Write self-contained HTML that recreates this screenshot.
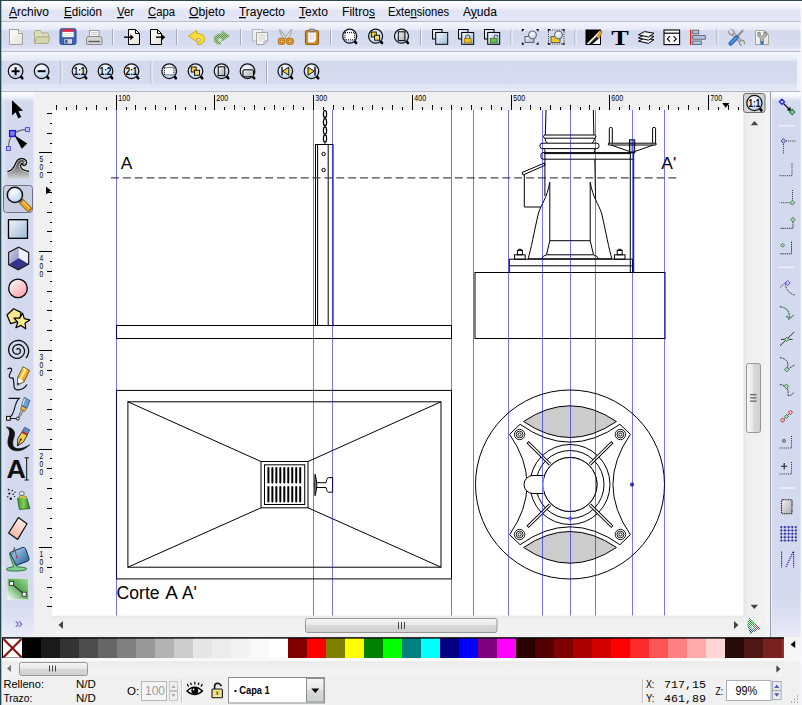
<!DOCTYPE html>
<html><head><meta charset="utf-8"><title>Inkscape</title>
<style>html,body{margin:0;padding:0;background:#f0f0f0;overflow:hidden}svg{display:block}text{white-space:pre}</style>
</head><body>
<svg width="802" height="705" viewBox="0 0 802 705">
<defs>
<clipPath id="cv"><rect x="52" y="110" width="691.5" height="505.5"/></clipPath>

<linearGradient id="gMenu" x1="0" y1="0" x2="0" y2="1"><stop offset="0" stop-color="#ffffff"/><stop offset="0.35" stop-color="#f1f2fa"/><stop offset="0.5" stop-color="#e1e4f4"/><stop offset="1" stop-color="#e6e8f6"/></linearGradient>
<linearGradient id="gTb" x1="0" y1="0" x2="0" y2="1"><stop offset="0" stop-color="#f6f7fc"/><stop offset="0.27" stop-color="#e5e8f6"/><stop offset="0.29" stop-color="#d3d9ee"/><stop offset="0.8" stop-color="#d8ddf0"/><stop offset="0.88" stop-color="#e2e6f4"/><stop offset="1" stop-color="#e9ecf7"/></linearGradient>
<linearGradient id="gTb2" x1="0" y1="0" x2="0" y2="1"><stop offset="0" stop-color="#f6f7fc"/><stop offset="0.21" stop-color="#e5e8f6"/><stop offset="0.23" stop-color="#d3d9ee"/><stop offset="0.78" stop-color="#d6dbef"/><stop offset="0.82" stop-color="#dfe3f3"/><stop offset="1" stop-color="#e8ebf7"/></linearGradient>
<linearGradient id="gSideV" x1="0" y1="0" x2="0" y2="1"><stop offset="0" stop-color="#fbfbfe" stop-opacity="1"/><stop offset="0.008" stop-color="#f4f5fc" stop-opacity="1"/><stop offset="0.02" stop-color="#e0e4f4" stop-opacity="0"/><stop offset="0.9" stop-color="#d3d9ee" stop-opacity="0"/><stop offset="1" stop-color="#f0f2fa" stop-opacity="0.8"/></linearGradient>
<linearGradient id="gSide" x1="0" y1="0" x2="1" y2="0"><stop offset="0" stop-color="#e6e9f6"/><stop offset="0.2" stop-color="#d3d9ee"/><stop offset="0.93" stop-color="#d3d9ee"/><stop offset="0.96" stop-color="#e6e9f5"/><stop offset="1" stop-color="#f0f1f6"/></linearGradient>
<linearGradient id="gThumbH" x1="0" y1="0" x2="0" y2="1"><stop offset="0" stop-color="#f6f6f6"/><stop offset="0.45" stop-color="#e9e9e9"/><stop offset="0.5" stop-color="#d9d9d9"/><stop offset="1" stop-color="#cfcfcf"/></linearGradient>
<linearGradient id="gThumbV" x1="0" y1="0" x2="1" y2="0"><stop offset="0" stop-color="#f6f6f6"/><stop offset="0.45" stop-color="#e9e9e9"/><stop offset="0.5" stop-color="#d9d9d9"/><stop offset="1" stop-color="#cfcfcf"/></linearGradient>
<linearGradient id="gTrackH" x1="0" y1="0" x2="0" y2="1"><stop offset="0" stop-color="#e9e9e9"/><stop offset="0.2" stop-color="#efefef"/><stop offset="1" stop-color="#f3f3f3"/></linearGradient>
<linearGradient id="gTrackV" x1="0" y1="0" x2="1" y2="0"><stop offset="0" stop-color="#e6e6e6"/><stop offset="0.2" stop-color="#eeeeee"/><stop offset="1" stop-color="#f2f2f2"/></linearGradient>


<radialGradient id="gLens" cx="0.4" cy="0.3" r="0.8"><stop offset="0" stop-color="#ffffff"/><stop offset="0.6" stop-color="#cfe0f4"/><stop offset="1" stop-color="#a9c4e6"/></radialGradient>
<linearGradient id="gPage" x1="0" y1="0" x2="1" y2="1"><stop offset="0" stop-color="#ffffff"/><stop offset="1" stop-color="#e3e3d6"/></linearGradient>
<linearGradient id="gBlueSq" x1="0" y1="0" x2="1" y2="1"><stop offset="0" stop-color="#f2f7fc"/><stop offset="1" stop-color="#9db8d8"/></linearGradient>
<linearGradient id="gPink" x1="0.15" y1="0.05" x2="0.85" y2="0.95"><stop offset="0" stop-color="#ffffff"/><stop offset="0.45" stop-color="#fdd0d4"/><stop offset="1" stop-color="#f4a0aa"/></linearGradient>
<linearGradient id="gEraser" x1="0.8" y1="0" x2="0.2" y2="1"><stop offset="0" stop-color="#fff4ee"/><stop offset="1" stop-color="#f0b09c"/></linearGradient>
<linearGradient id="gGreenSq" x1="0" y1="1" x2="1" y2="0"><stop offset="0" stop-color="#ffffff"/><stop offset="0.55" stop-color="#55aa55"/><stop offset="1" stop-color="#a8d8a8"/></linearGradient>
<linearGradient id="gWave" gradientUnits="userSpaceOnUse" x1="0" y1="163" x2="0" y2="179"><stop offset="0" stop-color="#5a5a5a"/><stop offset="1" stop-color="#d4d4d4"/></linearGradient>
<linearGradient id="gGrayPg" x1="0" y1="0" x2="1" y2="1"><stop offset="0" stop-color="#f4f4f4"/><stop offset="1" stop-color="#a8a8a8"/></linearGradient>
<linearGradient id="gOrange" x1="0" y1="0" x2="1" y2="1"><stop offset="0" stop-color="#ffd23a"/><stop offset="1" stop-color="#e08a10"/></linearGradient>
<linearGradient id="gBucket" x1="0" y1="0" x2="1" y2="1"><stop offset="0" stop-color="#cfe4f4"/><stop offset="0.5" stop-color="#6a9cc8"/><stop offset="1" stop-color="#2a568c"/></linearGradient>
<linearGradient id="gCan" x1="0" y1="0" x2="1" y2="0"><stop offset="0" stop-color="#3f9a2a"/><stop offset="0.5" stop-color="#7fd05a"/><stop offset="1" stop-color="#2f7a20"/></linearGradient>
<linearGradient id="gBox1" x1="0" y1="0" x2="1" y2="1"><stop offset="0" stop-color="#d8d8f0"/><stop offset="1" stop-color="#8888c0"/></linearGradient>
<radialGradient id="gCmsR" gradientUnits="userSpaceOnUse" cx="760" cy="628.3" r="8"><stop offset="0" stop-color="#b01020"/><stop offset="0.5" stop-color="#c02060" stop-opacity="0.7"/><stop offset="1" stop-color="#c02060" stop-opacity="0"/></radialGradient>
<radialGradient id="gCmsB" gradientUnits="userSpaceOnUse" cx="750" cy="633" r="7.5"><stop offset="0" stop-color="#101070"/><stop offset="0.5" stop-color="#2040c0" stop-opacity="0.8"/><stop offset="1" stop-color="#2060c0" stop-opacity="0"/></radialGradient>
<radialGradient id="gCmsC" gradientUnits="userSpaceOnUse" cx="752.5" cy="627.5" r="3"><stop offset="0" stop-color="#d0ffff" stop-opacity="0.8"/><stop offset="1" stop-color="#60e0e0" stop-opacity="0"/></radialGradient>
<pattern id="pChk" width="2" height="2" patternUnits="userSpaceOnUse"><rect width="1" height="1" fill="#f2f2f2"/><rect x="1" y="1" width="1" height="1" fill="#f2f2f2"/></pattern>
<pattern id="pHatch" width="2" height="2" patternUnits="userSpaceOnUse"><rect width="2" height="2" fill="#b4d0a4"/><rect width="1" height="1" fill="#5a9340"/><rect x="1" y="1" width="1" height="1" fill="#5a9340"/></pattern>

</defs>
<rect x="0" y="0" width="802" height="705" fill="#f0f0f0"/>
<rect x="0" y="0" width="802" height="22" fill="url(#gMenu)"/>
<rect x="0" y="21" width="802" height="1" fill="#b9bcc8"/>
<rect x="0" y="22" width="802" height="30" fill="url(#gTb)"/>
<rect x="0" y="51" width="802" height="1" fill="#b9bdcd"/>
<rect x="0" y="52" width="802" height="40" fill="url(#gTb2)"/>
<rect x="797" y="52" width="5" height="40" fill="#f2f3fa"/>
<rect x="0" y="91" width="802" height="1" fill="#b4b8c9"/>
<rect x="0" y="92" width="35" height="545" fill="url(#gSide)"/>
<rect x="765" y="92" width="6" height="545" fill="#f4f4f8"/>
<rect x="770" y="92" width="32" height="545" fill="#d3d9ee"/>
<rect x="0" y="92" width="35" height="545" fill="url(#gSideV)"/><rect x="770" y="92" width="32" height="545" fill="url(#gSideV)"/>
<rect x="52" y="110" width="691.5" height="505.5" fill="#ffffff"/>
<text x="9" y="16" font-family="'Liberation Sans', sans-serif" font-size="12.5" fill="#000" textLength="40" lengthAdjust="spacingAndGlyphs"><tspan text-decoration="underline">A</tspan>rchivo</text>
<text x="64" y="16" font-family="'Liberation Sans', sans-serif" font-size="12.5" fill="#000" textLength="38" lengthAdjust="spacingAndGlyphs"><tspan text-decoration="underline">E</tspan>dición</text>
<text x="117" y="16" font-family="'Liberation Sans', sans-serif" font-size="12.5" fill="#000" textLength="17" lengthAdjust="spacingAndGlyphs"><tspan text-decoration="underline">V</tspan>er</text>
<text x="148" y="16" font-family="'Liberation Sans', sans-serif" font-size="12.5" fill="#000" textLength="27" lengthAdjust="spacingAndGlyphs"><tspan text-decoration="underline">C</tspan>apa</text>
<text x="189" y="16" font-family="'Liberation Sans', sans-serif" font-size="12.5" fill="#000" textLength="36" lengthAdjust="spacingAndGlyphs"><tspan text-decoration="underline">O</tspan>bjeto</text>
<text x="239" y="16" font-family="'Liberation Sans', sans-serif" font-size="12.5" fill="#000" textLength="46" lengthAdjust="spacingAndGlyphs"><tspan text-decoration="underline">T</tspan>rayecto</text>
<text x="299" y="16" font-family="'Liberation Sans', sans-serif" font-size="12.5" fill="#000" textLength="29" lengthAdjust="spacingAndGlyphs"><tspan text-decoration="underline">T</tspan>exto</text>
<text x="342" y="16" font-family="'Liberation Sans', sans-serif" font-size="12.5" fill="#000" textLength="33" lengthAdjust="spacingAndGlyphs">Filtro<tspan text-decoration="underline">s</tspan></text>
<text x="388" y="16" font-family="'Liberation Sans', sans-serif" font-size="12.5" fill="#000" textLength="61" lengthAdjust="spacingAndGlyphs">Exte<tspan text-decoration="underline">n</tspan>siones</text>
<text x="463" y="16" font-family="'Liberation Sans', sans-serif" font-size="12.5" fill="#000" textLength="34" lengthAdjust="spacingAndGlyphs">A<tspan text-decoration="underline">y</tspan>uda</text>
<path d="M56.5 104.5V110 M66.5 107V110 M76.5 104.5V110 M86.5 107V110 M96.5 104.5V110 M106.5 107V110 M116.5 95V110 M126.5 107V110 M135.5 104.5V110 M145.5 107V110 M155.5 104.5V110 M165.5 107V110 M175.5 104.5V110 M185.5 107V110 M195.5 104.5V110 M205.5 107V110 M214.5 95V110 M224.5 107V110 M234.5 104.5V110 M244.5 107V110 M254.5 104.5V110 M264.5 107V110 M274.5 104.5V110 M283.5 107V110 M293.5 104.5V110 M303.5 107V110 M313.5 95V110 M323.5 107V110 M333.5 104.5V110 M343.5 107V110 M353.5 104.5V110 M362.5 107V110 M372.5 104.5V110 M382.5 107V110 M392.5 104.5V110 M402.5 107V110 M412.5 95V110 M422.5 107V110 M432.5 104.5V110 M441.5 107V110 M451.5 104.5V110 M461.5 107V110 M471.5 104.5V110 M481.5 107V110 M491.5 104.5V110 M501.5 107V110 M511.5 95V110 M520.5 107V110 M530.5 104.5V110 M540.5 107V110 M550.5 104.5V110 M560.5 107V110 M570.5 104.5V110 M580.5 107V110 M589.5 104.5V110 M599.5 107V110 M609.5 95V110 M619.5 107V110 M629.5 104.5V110 M639.5 107V110 M649.5 104.5V110 M659.5 107V110 M668.5 104.5V110 M678.5 107V110 M688.5 104.5V110 M698.5 107V110 M708.5 95V110 M718.5 107V110 M728.5 104.5V110 M738.5 107V110" stroke="#000" stroke-width="1" fill="none" shape-rendering="crispEdges"/>
<text x="118.3" y="101.2" font-family="'Liberation Sans', sans-serif" font-size="8.3" fill="#000" textLength="11.8" lengthAdjust="spacingAndGlyphs">100</text>
<text x="216.3" y="101.2" font-family="'Liberation Sans', sans-serif" font-size="8.3" fill="#000" textLength="11.8" lengthAdjust="spacingAndGlyphs">200</text>
<text x="315.3" y="101.2" font-family="'Liberation Sans', sans-serif" font-size="8.3" fill="#000" textLength="11.8" lengthAdjust="spacingAndGlyphs">300</text>
<text x="414.3" y="101.2" font-family="'Liberation Sans', sans-serif" font-size="8.3" fill="#000" textLength="11.8" lengthAdjust="spacingAndGlyphs">400</text>
<text x="513.3" y="101.2" font-family="'Liberation Sans', sans-serif" font-size="8.3" fill="#000" textLength="11.8" lengthAdjust="spacingAndGlyphs">500</text>
<text x="611.3" y="101.2" font-family="'Liberation Sans', sans-serif" font-size="8.3" fill="#000" textLength="11.8" lengthAdjust="spacingAndGlyphs">600</text>
<text x="710.3" y="101.2" font-family="'Liberation Sans', sans-serif" font-size="8.3" fill="#000" textLength="11.8" lengthAdjust="spacingAndGlyphs">700</text>
<path d="M47 113.5H52 M50 123.5H52 M47 133.5H52 M50 143.5H52 M39 152.5H52 M50 162.5H52 M47 172.5H52 M50 182.5H52 M47 192.5H52 M50 202.5H52 M47 212.5H52 M50 222.5H52 M47 231.5H52 M50 241.5H52 M39 251.5H52 M50 261.5H52 M47 271.5H52 M50 281.5H52 M47 291.5H52 M50 301.5H52 M47 310.5H52 M50 320.5H52 M47 330.5H52 M50 340.5H52 M39 350.5H52 M50 360.5H52 M47 370.5H52 M50 379.5H52 M47 389.5H52 M50 399.5H52 M47 409.5H52 M50 419.5H52 M47 429.5H52 M50 439.5H52 M39 449.5H52 M50 458.5H52 M47 468.5H52 M50 478.5H52 M47 488.5H52 M50 498.5H52 M47 508.5H52 M50 518.5H52 M47 528.5H52 M50 537.5H52 M39 547.5H52 M50 557.5H52 M47 567.5H52 M50 577.5H52 M47 587.5H52 M50 597.5H52 M47 606.5H52" stroke="#000" stroke-width="1" fill="none" shape-rendering="crispEdges"/>
<text x="39.6" y="161.9" font-family="'Liberation Sans', sans-serif" font-size="8.3" fill="#000" textLength="3.7" lengthAdjust="spacingAndGlyphs">5</text>
<text x="39.6" y="169.9" font-family="'Liberation Sans', sans-serif" font-size="8.3" fill="#000" textLength="3.7" lengthAdjust="spacingAndGlyphs">0</text>
<text x="39.6" y="177.9" font-family="'Liberation Sans', sans-serif" font-size="8.3" fill="#000" textLength="3.7" lengthAdjust="spacingAndGlyphs">0</text>
<text x="39.6" y="260.9" font-family="'Liberation Sans', sans-serif" font-size="8.3" fill="#000" textLength="3.7" lengthAdjust="spacingAndGlyphs">4</text>
<text x="39.6" y="268.9" font-family="'Liberation Sans', sans-serif" font-size="8.3" fill="#000" textLength="3.7" lengthAdjust="spacingAndGlyphs">0</text>
<text x="39.6" y="276.9" font-family="'Liberation Sans', sans-serif" font-size="8.3" fill="#000" textLength="3.7" lengthAdjust="spacingAndGlyphs">0</text>
<text x="39.6" y="359.9" font-family="'Liberation Sans', sans-serif" font-size="8.3" fill="#000" textLength="3.7" lengthAdjust="spacingAndGlyphs">3</text>
<text x="39.6" y="367.9" font-family="'Liberation Sans', sans-serif" font-size="8.3" fill="#000" textLength="3.7" lengthAdjust="spacingAndGlyphs">0</text>
<text x="39.6" y="375.9" font-family="'Liberation Sans', sans-serif" font-size="8.3" fill="#000" textLength="3.7" lengthAdjust="spacingAndGlyphs">0</text>
<text x="39.6" y="458.9" font-family="'Liberation Sans', sans-serif" font-size="8.3" fill="#000" textLength="3.7" lengthAdjust="spacingAndGlyphs">2</text>
<text x="39.6" y="466.9" font-family="'Liberation Sans', sans-serif" font-size="8.3" fill="#000" textLength="3.7" lengthAdjust="spacingAndGlyphs">0</text>
<text x="39.6" y="474.9" font-family="'Liberation Sans', sans-serif" font-size="8.3" fill="#000" textLength="3.7" lengthAdjust="spacingAndGlyphs">0</text>
<text x="39.6" y="556.9" font-family="'Liberation Sans', sans-serif" font-size="8.3" fill="#000" textLength="3.7" lengthAdjust="spacingAndGlyphs">1</text>
<text x="39.6" y="564.9" font-family="'Liberation Sans', sans-serif" font-size="8.3" fill="#000" textLength="3.7" lengthAdjust="spacingAndGlyphs">0</text>
<text x="39.6" y="572.9" font-family="'Liberation Sans', sans-serif" font-size="8.3" fill="#000" textLength="3.7" lengthAdjust="spacingAndGlyphs">0</text>
<path d="M722.2 103h7.2l-3.6 4.8z" fill="#000"/>
<path d="M46 186.5v8l5 -4z" fill="#000"/>
<g clip-path="url(#cv)">
<rect x="116.5" y="325.5" width="335" height="13" stroke="#000" stroke-width="1" fill="none"/>
<rect x="315.5" y="144.5" width="17.5" height="181" stroke="#000" stroke-width="1" fill="none"/>
<path d="M317.6 144.5V325.5M328.2 144.5V325.5" stroke="#000" stroke-width="1" fill="none"/>
<circle cx="323.6" cy="154" r="1.7" stroke="#000" stroke-width="1" fill="none"/><circle cx="323.6" cy="170" r="1.7" stroke="#000" stroke-width="1" fill="none"/>
<ellipse cx="325" cy="114" rx="1.6" ry="3.6" stroke="#000" stroke-width="1.25" fill="none"/>
<ellipse cx="325" cy="122.2" rx="1.6" ry="3.6" stroke="#000" stroke-width="1.25" fill="none"/>
<ellipse cx="325" cy="130.4" rx="1.6" ry="3.6" stroke="#000" stroke-width="1.25" fill="none"/>
<ellipse cx="325" cy="138.4" rx="1.6" ry="3.6" stroke="#000" stroke-width="1.25" fill="none"/>
<path d="M325 142.3V144.5" stroke="#000" stroke-width="1" fill="none"/>
<text x="120.8" y="168.7" font-family="'Liberation Sans', sans-serif" font-size="17.4" fill="#000">A</text>
<text x="661.3" y="168.6" font-family="'Liberation Sans', sans-serif" font-size="17.4" fill="#000">A'</text>
<text y="598.7" font-family="'Liberation Sans', sans-serif" font-size="18" fill="#000"><tspan x="116.6" textLength="43" lengthAdjust="spacingAndGlyphs">Corte</tspan> <tspan x="165.3" textLength="11.6" lengthAdjust="spacingAndGlyphs">A</tspan> <tspan x="181.9" textLength="14.8" lengthAdjust="spacingAndGlyphs">A'</tspan></text>
<path d="M111 177.9H676.4" stroke="#4a4a4a" stroke-width="1.4" stroke-dasharray="7.9 3.96" fill="none"/>
<rect x="116.5" y="390.4" width="335" height="188.5" stroke="#000" stroke-width="1" fill="none"/>
<rect x="127.9" y="401.8" width="313.1" height="165.4" stroke="#000" stroke-width="1" fill="none"/>
<path d="M127.9 401.8L261 461.5M441 401.8L308 461.5M127.9 567.2L261 507.8M441 567.2L308 507.8" stroke="#000" stroke-width="1" fill="none"/>
<rect x="261" y="461.5" width="47" height="46.3" stroke="#000" stroke-width="1" fill="none"/>
<rect x="264.5" y="464.8" width="40.2" height="39.7" stroke="#000" stroke-width="1" fill="none" stroke-width="1.2"/>
<path d="M268.40 468V482.6M268.40 487V501.4M272.38 468V482.6M272.38 487V501.4M276.35 468V482.6M276.35 487V501.4M280.32 468V482.6M280.32 487V501.4M284.30 468V482.6M284.30 487V501.4M288.27 468V482.6M288.27 487V501.4M292.25 468V482.6M292.25 487V501.4M296.22 468V482.6M296.22 487V501.4M300.20 468V482.6M300.20 487V501.4" stroke="#000" stroke-width="2" stroke-linecap="round" fill="none"/>
<path d="M315 474.3Q318.6 485 315 495.8Q314.4 485 315 474.3Z" fill="#999" stroke="#000" stroke-width="1" />
<path d="M317 482.7H326C326.6 480.5 327 477.6 328.6 477.6H332.6V492.2H328.6C327 492.2 326.6 489.6 326 487.5H317" stroke="#000" stroke-width="1" fill="none"/>
<rect x="475" y="272.5" width="190" height="66" stroke="#000" stroke-width="1" fill="none"/>
<rect x="509.3" y="259.2" width="123.2" height="13.3" stroke="#000" stroke-width="1" fill="none"/>
<path d="M509.3 265.8H632.5" stroke="#000" stroke-width="1" fill="none"/>
<path d="M546 110L545.3 135M593.3 110L593.9 135" stroke="#000" stroke-width="1" fill="none"/>
<rect x="543.5" y="135" width="52.5" height="3.2" rx="1.6" stroke="#000" stroke-width="1" fill="none"/>
<path d="M545 138.2Q545 141.5 547.5 143.2M594.5 138.2Q594.5 141.5 592 143.2" stroke="#000" stroke-width="1" fill="none"/>
<rect x="540" y="143.2" width="59" height="5.4" rx="2.2" stroke="#000" stroke-width="1" fill="none"/>
<path d="M543.5 148.6Q545.5 150 545 152.6M595.5 148.6Q593.5 150 594.5 152.6" stroke="#000" stroke-width="1" fill="none"/>
<path d="M633 152.6H543Q541 152.6 541 154.5V157.3Q541 159.2 543 159.2H633" stroke="#000" stroke-width="1" fill="none"/>
<path d="M544 153.6H630" stroke="#000" stroke-width="1" fill="none"/>
<path d="M544.9 153V159.2" stroke="#000" stroke-width="1" fill="none"/>
<path d="M544.9 159.2V196M594.8 159.2L595.6 200" stroke="#000" stroke-width="1" fill="none"/>
<path d="M549.8 182.3V240.7H590.2V182.3" stroke="#000" stroke-width="1" fill="none"/>
<path d="M549.8 182.3C547 198 541.5 204 538.5 213C534 232 531 250 528 258.8" stroke="#000" stroke-width="1" fill="none"/>
<path d="M590.2 182.3C593 198 598.5 204 601.5 213C606 232 609 250 612 258.8" stroke="#000" stroke-width="1" fill="none"/>
<path d="M528 258.8H612" stroke="#000" stroke-width="1" fill="none"/>
<path d="M549.8 240.7L546.5 254.8H593.5L590.2 240.7" stroke="#000" stroke-width="1" fill="none"/>
<path d="M546.5 254.8Q543 255.5 541.5 258.8M593.5 254.8Q597 255.5 598.5 258.8" stroke="#000" stroke-width="1" fill="none"/>
<rect x="514.6" y="254.8" width="10.6" height="4.4" stroke="#000" stroke-width="1" fill="none"/>
<rect x="517.4" y="250.5" width="5" height="4.3" stroke="#000" stroke-width="1" fill="none"/>
<path d="M518.4 250.5v-1.2h3v1.2" stroke="#000" stroke-width="1" fill="none"/>
<rect x="614.4" y="254.8" width="10.6" height="4.4" stroke="#000" stroke-width="1" fill="none"/>
<rect x="617.1999999999999" y="250.5" width="5" height="4.3" stroke="#000" stroke-width="1" fill="none"/>
<path d="M618.1999999999999 250.5v-1.2h3v1.2" stroke="#000" stroke-width="1" fill="none"/>
<path d="M522 172.5L544.5 163L545 165.3L523 175Z" stroke="#000" stroke-width="1" fill="none"/>
<path d="M524.3 174.5V207H541" stroke="#000" stroke-width="1" fill="none"/>
<rect x="630.3" y="152" width="3.4" height="120.5" stroke="#000" stroke-width="1" fill="none"/>
<rect x="629.5" y="139.8" width="5.2" height="13" stroke="#000" stroke-width="1" fill="none"/>
<path d="M631 139.8V152.5M633.2 139.8V152.5" stroke="#000" stroke-width="0.6" fill="none"/>
<path d="M608.4 143.2H656V145H608.4Z" stroke="#000" stroke-width="1" fill="none"/>
<path d="M609.3 143.2V128.8Q609.3 127.3 610.8 127.3Q612.3 127.3 612.3 128.8V143.2M652.6 143.2V128.8Q652.6 127.3 654.1 127.3Q655.6 127.3 655.6 128.8V143.2" stroke="#000" stroke-width="1" fill="none"/>
<path d="M611 145L629.5 151.5M653.5 145L634.7 151.5" stroke="#000" stroke-width="1" fill="none"/>
<circle cx="570" cy="484.5" r="94.5" stroke="#000" stroke-width="1" fill="none"/>
<path d="M523.6 421.5Q570 390.1 616.4 421.5Q570 453.5 523.6 421.5Z" fill="#cccccc" stroke="#000" stroke-width="1"/>
<path d="M523.6 547.5Q570 578.9000000000001 616.4 547.5Q570 515.5 523.6 547.5Z" fill="#cccccc" stroke="#000" stroke-width="1"/>
<path d="M509.6 434.3L520.1 424.3Q570.0 460.0 619.9 424.3L630.4 434.3Q595.5 484.5 630.4 534.7L619.9 544.7Q570.0 509.0 520.1 544.7L509.6 534.7Q544.5 484.5 509.6 434.3Z" stroke="#000" stroke-width="1" fill="none"/>
<circle cx="570" cy="484.5" r="40" stroke="#000" stroke-width="1" fill="#fff"/>
<circle cx="570" cy="484.5" r="34" stroke="#000" stroke-width="1" fill="#fff"/>
<circle cx="570" cy="484.5" r="27" stroke="#000" stroke-width="1" fill="#fff"/>
<path d="M612.4 526.9L589.9 504.7" stroke="#000" stroke-width="3.2" fill="none"/>
<path d="M611.7 526.2L589.9 504.7" stroke="#fff" stroke-width="1.3" fill="none"/>
<path d="M612.4 442.1L589.9 464.3" stroke="#000" stroke-width="3.2" fill="none"/>
<path d="M611.7 442.8L589.9 464.3" stroke="#fff" stroke-width="1.3" fill="none"/>
<path d="M527.6 526.9L550.1 504.7" stroke="#000" stroke-width="3.2" fill="none"/>
<path d="M528.3 526.2L550.1 504.7" stroke="#fff" stroke-width="1.3" fill="none"/>
<path d="M527.6 442.1L550.1 464.3" stroke="#000" stroke-width="3.2" fill="none"/>
<path d="M528.3 442.8L550.1 464.3" stroke="#fff" stroke-width="1.3" fill="none"/>
<circle cx="570" cy="484.5" r="27" stroke="#000" stroke-width="1" fill="#fff"/>
<path d="M543.5 475.5H533A9 9 0 0 0 533 493.5H543.5" stroke="#000" stroke-width="1" fill="#fff"/>
<circle cx="620.4" cy="534.5" r="5.2" stroke="#000" stroke-width="0.9" fill="none"/>
<circle cx="620.4" cy="534.5" r="3.4" stroke="#000" stroke-width="0.9" fill="none"/>
<circle cx="620.4" cy="534.5" r="1.6" stroke="#000" stroke-width="0.9" fill="none"/>
<circle cx="620.4" cy="434.5" r="5.2" stroke="#000" stroke-width="0.9" fill="none"/>
<circle cx="620.4" cy="434.5" r="3.4" stroke="#000" stroke-width="0.9" fill="none"/>
<circle cx="620.4" cy="434.5" r="1.6" stroke="#000" stroke-width="0.9" fill="none"/>
<circle cx="519.6" cy="534.5" r="5.2" stroke="#000" stroke-width="0.9" fill="none"/>
<circle cx="519.6" cy="534.5" r="3.4" stroke="#000" stroke-width="0.9" fill="none"/>
<circle cx="519.6" cy="534.5" r="1.6" stroke="#000" stroke-width="0.9" fill="none"/>
<circle cx="519.6" cy="434.5" r="5.2" stroke="#000" stroke-width="0.9" fill="none"/>
<circle cx="519.6" cy="434.5" r="3.4" stroke="#000" stroke-width="0.9" fill="none"/>
<circle cx="519.6" cy="434.5" r="1.6" stroke="#000" stroke-width="0.9" fill="none"/>
<circle cx="632" cy="484.5" r="1.6" stroke="#223" stroke-width="1" fill="#55f"/>
<circle cx="570" cy="518.6" r="1.5" stroke="#33f" stroke-width="0.8" fill="#aaf"/>
<path d="M116.5 110V616M313.5 110V616M332.5 110V616M451.5 110V616M473.5 110V616M508.5 110V616M542.5 110V616M570.5 110V616M595.5 110V616M632.5 110V616M664.5 110V616" stroke="#0000ff" stroke-width="1" fill="none" opacity="0.55" shape-rendering="crispEdges"/>
</g>
<rect x="52" y="616" width="692" height="19" fill="url(#gTrackH)"/>
<path d="M63 621v8l-4.5 -4z" fill="#444"/>
<path d="M734 621v8l4.5 -4z" fill="#444"/>
<rect x="305.5" y="618.5" width="191.5" height="14" rx="2" fill="url(#gThumbH)" stroke="#979797"/>
<path d="M398.5 622v7M401.5 622v7M404.5 622v7" stroke="#444" stroke-width="1"/>
<rect x="743.5" y="113" width="21.5" height="503" fill="url(#gTrackV)"/>
<path d="M750.8 125.3h7.4l-3.7 -4.2z" fill="#444"/>
<path d="M750.6 604.8h7.4l-3.7 4.2z" fill="#444"/>
<rect x="746.5" y="363.5" width="14" height="69" rx="2" fill="url(#gThumbV)" stroke="#979797"/>
<path d="M750 394.7h6.5M750 397.9h6.5M750 401.1h6.5" stroke="#444" stroke-width="1"/>
<rect x="2" y="661.4" width="782" height="15" fill="url(#gTrackH)"/>
<path d="M11 665v7l-4 -3.5z" fill="#777"/>
<path d="M776.4 665.2v7.4l4 -3.7z" fill="#444"/>
<rect x="19.5" y="662.5" width="68" height="13" rx="2" fill="url(#gThumbH)" stroke="#979797"/>
<path d="M49.5 665.5v6M52.5 665.5v6M55.5 665.5v6" stroke="#444" stroke-width="1"/>
<rect x="2" y="637.2" width="782" height="21.2" fill="#000"/>
<rect x="3" y="638.6" width="19" height="19" fill="#fff"/>
<path d="M3.5 639L21.5 657.2M21.5 639L3.5 657.2" stroke="#8b1010" stroke-width="2.1" fill="none"/>
<rect x="22" y="638.6" width="19.05" height="20" fill="#000000"/>
<rect x="41" y="638.6" width="19.05" height="20" fill="#1a1a1a"/>
<rect x="60" y="638.6" width="19.05" height="20" fill="#333333"/>
<rect x="79" y="638.6" width="19.05" height="20" fill="#4d4d4d"/>
<rect x="98" y="638.6" width="19.05" height="20" fill="#666666"/>
<rect x="117" y="638.6" width="19.05" height="20" fill="#808080"/>
<rect x="136" y="638.6" width="19.05" height="20" fill="#999999"/>
<rect x="155" y="638.6" width="19.05" height="20" fill="#b3b3b3"/>
<rect x="174" y="638.6" width="19.05" height="20" fill="#cccccc"/>
<rect x="193" y="638.6" width="19.05" height="20" fill="#e6e6e6"/>
<rect x="212" y="638.6" width="19.05" height="20" fill="#ececec"/>
<rect x="231" y="638.6" width="19.05" height="20" fill="#f2f2f2"/>
<rect x="250" y="638.6" width="19.05" height="20" fill="#f9f9f9"/>
<rect x="269" y="638.6" width="19.05" height="20" fill="#ffffff"/>
<rect x="288" y="638.6" width="19.05" height="20" fill="#800000"/>
<rect x="307" y="638.6" width="19.05" height="20" fill="#ff0000"/>
<rect x="326" y="638.6" width="19.05" height="20" fill="#808000"/>
<rect x="345" y="638.6" width="19.05" height="20" fill="#ffff00"/>
<rect x="364" y="638.6" width="19.05" height="20" fill="#008000"/>
<rect x="383" y="638.6" width="19.05" height="20" fill="#00ff00"/>
<rect x="402" y="638.6" width="19.05" height="20" fill="#008080"/>
<rect x="421" y="638.6" width="19.05" height="20" fill="#00ffff"/>
<rect x="440" y="638.6" width="19.05" height="20" fill="#000080"/>
<rect x="459" y="638.6" width="19.05" height="20" fill="#0000ff"/>
<rect x="478" y="638.6" width="19.05" height="20" fill="#800080"/>
<rect x="497" y="638.6" width="19.05" height="20" fill="#ff00ff"/>
<rect x="516" y="638.6" width="19.05" height="20" fill="#2b0000"/>
<rect x="535" y="638.6" width="19.05" height="20" fill="#550000"/>
<rect x="554" y="638.6" width="19.05" height="20" fill="#800000"/>
<rect x="573" y="638.6" width="19.05" height="20" fill="#aa0000"/>
<rect x="592" y="638.6" width="19.05" height="20" fill="#d40000"/>
<rect x="611" y="638.6" width="19.05" height="20" fill="#ff0000"/>
<rect x="630" y="638.6" width="19.05" height="20" fill="#ff2a2a"/>
<rect x="649" y="638.6" width="19.05" height="20" fill="#ff5555"/>
<rect x="668" y="638.6" width="19.05" height="20" fill="#ff8080"/>
<rect x="687" y="638.6" width="19.05" height="20" fill="#ffaaaa"/>
<rect x="706" y="638.6" width="19.05" height="20" fill="#ffd5d5"/>
<rect x="725" y="638.6" width="19.05" height="20" fill="#280b0b"/>
<rect x="744" y="638.6" width="19.05" height="20" fill="#501616"/>
<rect x="763" y="638.6" width="19.05" height="20" fill="#782121"/>
<rect x="782" y="638.6" width="2" height="20" fill="#a02c2c"/>
<rect x="784" y="637" width="18" height="23" fill="#f6f6f6"/>
<rect x="1" y="658" width="801" height="3.4" fill="#f8f8f8"/>
<path d="M795.2 640.8v7.2l-4.6 -3.6z" fill="#000"/>
<text x="3.4" y="688" font-family="'Liberation Sans', sans-serif" font-size="11.5" fill="#000" textLength="40.6" lengthAdjust="spacingAndGlyphs">Relleno:</text>
<text x="3.4" y="702" font-family="'Liberation Sans', sans-serif" font-size="11.5" fill="#000" textLength="29" lengthAdjust="spacingAndGlyphs">Trazo:</text>
<text x="76" y="688" font-family="'Liberation Sans', sans-serif" font-size="11.5" fill="#000" >N/D</text>
<text x="76" y="702" font-family="'Liberation Sans', sans-serif" font-size="11.5" fill="#000" >N/D</text>
<text x="127" y="695" font-family="'Liberation Sans', sans-serif" font-size="11.5" fill="#000" font-size="12">O:</text>
<rect x="141.5" y="681.5" width="25" height="19" fill="#f4f4f4" stroke="#b5b5b5"/>
<text x="145" y="695" font-family="'Liberation Sans', sans-serif" font-size="12" fill="#9a9a9a">100</text>
<rect x="169.5" y="681.5" width="8" height="9" fill="#f0f0f0" stroke="#c4c4c4"/><rect x="169.5" y="691.5" width="8" height="9" fill="#f0f0f0" stroke="#c4c4c4"/>
<path d="M171.5 688h4l-2 -3zM171.5 694h4l-2 3z" fill="#aaa"/>
<path d="M181.5 679v24" stroke="#c8c8c8"/><path d="M182.5 679v24" stroke="#fff"/>
<rect x="228.5" y="677.5" width="96" height="25.5" fill="#fff" stroke="#8e8f8f"/>
<rect x="306.5" y="678.5" width="17.5" height="23.5" fill="url(#gThumbH)" stroke="#8e8f8f"/>
<path d="M311.3 688.4h8l-4 4.6z" fill="#000"/>
<text x="234" y="694" font-family="'Liberation Sans', sans-serif" font-size="11" font-weight="bold" fill="#000"><tspan font-size="8" dy="-0.8">•</tspan><tspan x="239.3" dy="0.8" textLength="30.4" lengthAdjust="spacingAndGlyphs">Capa 1</tspan></text>
<path d="M642.5 679v24" stroke="#c0c0c0"/><path d="M643.5 679v24" stroke="#fff"/>
<text x="646" y="688" font-family="'Liberation Sans', sans-serif" font-size="11.5" fill="#000" textLength="8.3" lengthAdjust="spacingAndGlyphs">X:</text>
<text x="646" y="702" font-family="'Liberation Sans', sans-serif" font-size="11.5" fill="#000" textLength="8.3" lengthAdjust="spacingAndGlyphs">Y:</text>
<text x="664" y="688" font-family="'Liberation Mono', monospace" font-size="11.5" fill="#000" textLength="42" lengthAdjust="spacingAndGlyphs">717,15</text>
<text x="664" y="702" font-family="'Liberation Mono', monospace" font-size="11.5" fill="#000" textLength="42" lengthAdjust="spacingAndGlyphs">461,89</text>
<text x="715.6" y="695" font-family="'Liberation Sans', sans-serif" font-size="11.5" fill="#000" font-size="12" textLength="7.6" lengthAdjust="spacingAndGlyphs">Z:</text>
<rect x="726.5" y="680.5" width="44.5" height="20" fill="#fff" stroke="#abadb3"/>
<text x="735.4" y="695" font-family="'Liberation Sans', sans-serif" font-size="12" fill="#000" textLength="21.6" lengthAdjust="spacingAndGlyphs">99%</text>
<rect x="772.5" y="681.5" width="8.6" height="8.8" fill="#ececf0" stroke="#a8a8b0"/><rect x="772.5" y="690.8" width="8.6" height="8.8" fill="#ececf0" stroke="#a8a8b0"/>
<path d="M774.2 688h5.2l-2.6 -3.6zM774.2 693.2h5.2l-2.6 3.6z" fill="#4a5ab8"/>
<path d="M797 702h1M794 702h1M797 699h1M791 702h1M794 699h1M797 696h1" stroke="#b8b8b8" stroke-width="2"/>
<path d="M112.5 29V45" stroke="#a7a9b6" stroke-width="1"/><path d="M113.5 29V45" stroke="#f6f7fc" stroke-width="1"/>
<path d="M176.5 29V45" stroke="#a7a9b6" stroke-width="1"/><path d="M177.5 29V45" stroke="#f6f7fc" stroke-width="1"/>
<path d="M240.5 29V45" stroke="#a7a9b6" stroke-width="1"/><path d="M241.5 29V45" stroke="#f6f7fc" stroke-width="1"/>
<path d="M330.5 29V45" stroke="#a7a9b6" stroke-width="1"/><path d="M331.5 29V45" stroke="#f6f7fc" stroke-width="1"/>
<path d="M420.5 29V45" stroke="#a7a9b6" stroke-width="1"/><path d="M421.5 29V45" stroke="#f6f7fc" stroke-width="1"/>
<path d="M511 29V45" stroke="#a7a9b6" stroke-width="1"/><path d="M512 29V45" stroke="#f6f7fc" stroke-width="1"/>
<path d="M575 29V45" stroke="#a7a9b6" stroke-width="1"/><path d="M576 29V45" stroke="#f6f7fc" stroke-width="1"/>
<path d="M717 29V45" stroke="#a7a9b6" stroke-width="1"/><path d="M718 29V45" stroke="#f6f7fc" stroke-width="1"/>
<path d="M9.5 29.5H18.5L22.5 33.5V44.5H9.5Z" fill="url(#gPage)" stroke="#a3a395" stroke-width="1"/><path d="M18.5 29.5V33.5H22.5" fill="#f4f4ec" stroke="#a3a395" stroke-width="1"/>
<path d="M34.5 43.5V31.5Q34.5 30.5 35.5 30.5H40Q41 30.5 41.3 31.5L41.8 33H47.5Q48.5 33 48.5 34V37" fill="#dcdcbc" stroke="#a9a986" stroke-width="1"/>
<path d="M34.5 43.5L36.5 37.5Q36.8 36.8 37.8 36.8H49Q49.8 36.8 49.6 37.6L48.3 42.6Q48 43.5 47 43.5Z" fill="#d3d3ac" stroke="#a9a986" stroke-width="1"/>
<rect x="60" y="28.8" width="16" height="15.6" rx="1.5" fill="#3c64b4" stroke="#2a4a96" stroke-width="1"/>
<rect x="62.3" y="29.3" width="11.4" height="2.6" fill="#ea2a3c"/>
<rect x="62.3" y="31.9" width="11.4" height="5.2" fill="#ffffff"/><path d="M63.5 33.6h9M63.5 35.4h9" stroke="#d8d8d8" stroke-width="0.7"/>
<rect x="64" y="38.8" width="8.3" height="5.2" fill="#d5d9e2" stroke="#24427f" stroke-width="0.6"/><rect x="65.3" y="39.8" width="2.2" height="3.4" fill="#3a5694"/>
<rect x="89.5" y="30.5" width="9.5" height="6.5" fill="#fafaf6" stroke="#9a9a9a" stroke-width="1"/><path d="M91.3 32.6h6M91.3 34.4h6" stroke="#b8b8b8" stroke-width="0.8"/>
<path d="M86.5 43.8V38.8Q86.5 36.5 88.8 36.5H99.8Q102 36.5 102 38.8V43.8Q102 44.5 101.3 44.5H87.2Q86.5 44.5 86.5 43.8Z" fill="#d4d4d0" stroke="#8a8a8a" stroke-width="1"/>
<path d="M88.5 41.5H100" stroke="#555" stroke-width="1.3"/>
<path d="M128.5 29.5H135.5L139.5 33.5V44.5H128.5Z" fill="url(#gPage)" stroke="#000" stroke-width="1"/><path d="M135.5 29.5V33.5H139.5" fill="none" stroke="#000" stroke-width="1"/>
<path d="M124 37.2H131.5" stroke="#000" stroke-width="1.4"/><path d="M130.3 34.2L133.8 37.2L130.3 40.2Z" fill="#000"/>
<path d="M150.5 29.5H157.5L161.5 33.5V44.5H150.5Z" fill="url(#gPage)" stroke="#000" stroke-width="1"/><path d="M157.5 29.5V33.5H161.5" fill="none" stroke="#000" stroke-width="1"/>
<path d="M156 37.2H163" stroke="#000" stroke-width="1.4"/><path d="M161.8 34.2L165.3 37.2L161.8 40.2Z" fill="#000"/>
<path d="M188.6 36L196.6 30.4V33.4C202.5 33.2 205 36.4 204.4 40C204 43 201.4 44.8 197.6 44.4L197.8 41.6C199.8 41.6 200.6 40.6 200.4 39.4C200.2 38.4 198.8 38 196.6 38.4V41.6Z" fill="#f7dc3a" stroke="#c9a512" stroke-width="0.9" stroke-linejoin="round"/>
<path d="M229.8 36 L221.8 30.4 V33.4 C215.9 33.2 213.4 36.4 214.0 40 C214.4 43 217.0 44.8 220.8 44.4 L220.6 41.6 C218.6 41.6 217.8 40.6 218.0 39.4 C218.2 38.4 219.6 38 221.8 38.4 V41.6 Z" fill="url(#pHatch)" stroke="#9cc08a" stroke-width="0.5" stroke-linejoin="round"/>
<rect x="252.5" y="29.5" width="10" height="11.5" fill="#eef0f6" stroke="#b4b6bd" stroke-width="1"/>
<path d="M256.5 32.5H267.5V41L264 44.5H256.5Z" fill="#f5f5f3" stroke="#a2a2a2" stroke-width="1"/><path d="M267.5 41H264V44.5" fill="none" stroke="#a2a2a2" stroke-width="0.9"/><path d="M258.5 35h7M258.5 37h7M258.5 39h7M258.5 41h4" stroke="#c9c9c9" stroke-width="0.8"/>
<path d="M279.8 29.2C279.3 32 281.5 36 284.6 39.2L286 37.2C284 34.5 281.5 31 279.8 29.2Z" fill="#d9d9d9" stroke="#8c8c8c" stroke-width="0.8"/>
<path d="M291.6 29.2C292.1 32 289.9 36 286.8 39.2L285.4 37.2C287.4 34.5 289.9 31 291.6 29.2Z" fill="#e4e4e4" stroke="#8c8c8c" stroke-width="0.8"/>
<rect x="278.3" y="38.3" width="6.6" height="6" rx="1.6" fill="#e19a2e" stroke="#b26f10" stroke-width="1"/><rect x="286.6" y="38.3" width="6.6" height="6" rx="1.6" fill="#e19a2e" stroke="#b26f10" stroke-width="1"/>
<rect x="280.3" y="40.2" width="2.6" height="2.3" fill="#f7dcae" stroke="#b26f10" stroke-width="0.6"/><rect x="288.6" y="40.2" width="2.6" height="2.3" fill="#f7dcae" stroke="#b26f10" stroke-width="0.6"/>
<rect x="305.5" y="30.5" width="13" height="14" rx="1.5" fill="#cf8a2a" stroke="#9a5f0c" stroke-width="1.2"/>
<path d="M308 32.5H316V40L314 42.5H308Z" fill="#fbfbf8" stroke="#b9b9b0" stroke-width="0.6"/><path d="M309.5 35h5M309.5 37h5M309.5 39h4" stroke="#c4c4c4" stroke-width="0.7"/>
<rect x="309" y="29" width="6" height="2.6" rx="0.8" fill="#9d9d9d" stroke="#6b6b6b" stroke-width="0.7"/>
<path d="M354.6 41.1L356.1 43.0" stroke="#000" stroke-width="2.6" stroke-linecap="round"/><circle cx="349.7" cy="36.2" r="7" fill="url(#gLens)" stroke="#111" stroke-width="1.25"/><rect x="345" y="32.6" width="9.4" height="7.2" fill="#fff" stroke="#000" stroke-width="1" stroke-dasharray="1 1"/>
<path d="M380.5 41.1L382.0 43.0" stroke="#000" stroke-width="2.6" stroke-linecap="round"/><circle cx="375.6" cy="36.2" r="7" fill="url(#gLens)" stroke="#111" stroke-width="1.25"/><rect x="371.3" y="32" width="5" height="5" fill="#f5cf3a" stroke="#000" stroke-width="0.9"/><rect x="374.6" y="35.2" width="5" height="5" fill="#f8dc62" stroke="#000" stroke-width="0.9"/>
<path d="M406.4 41.1L407.9 43.0" stroke="#000" stroke-width="2.6" stroke-linecap="round"/><circle cx="401.5" cy="36.2" r="7" fill="url(#gLens)" stroke="#111" stroke-width="1.25"/><rect x="398.3" y="31.8" width="6.6" height="8.8" fill="url(#gGrayPg)" stroke="#000" stroke-width="1"/>
<rect x="432.5" y="29.5" width="9.5" height="9.5" fill="url(#gBlueSq)" stroke="#000" stroke-width="1"/>
<rect x="435.7" y="32.5" width="12" height="11.8" fill="url(#gBlueSq)" stroke="#000" stroke-width="1"/>
<rect x="458.5" y="29.5" width="9.5" height="9.5" fill="url(#gBlueSq)" stroke="#000" stroke-width="1"/>
<rect x="461.7" y="32.5" width="12" height="11.8" fill="url(#gBlueSq)" stroke="#000" stroke-width="1"/>
<path d="M465.7 38.6V37Q465.7 35 467.7 35Q469.7 35 469.7 37V38.6" fill="none" stroke="#555" stroke-width="1.1"/><rect x="464.3" y="38.5" width="6.8" height="4.4" fill="#f0c020" stroke="#8a6a00" stroke-width="0.7"/>
<rect x="484.5" y="29.5" width="9.5" height="9.5" fill="url(#gBlueSq)" stroke="#000" stroke-width="1"/>
<rect x="487.7" y="32.5" width="12" height="11.8" fill="url(#gBlueSq)" stroke="#000" stroke-width="1"/>
<path d="M494.1 38.6V37Q494.1 35 495.9 35Q497.7 35 497.7 37" fill="none" stroke="#555" stroke-width="1.1"/><rect x="490.3" y="38.5" width="6.8" height="4.4" fill="#6cc04a" stroke="#2a6a1a" stroke-width="0.7"/>
<path d="M522 29.6h2M536.5 29.6h2M522 44.2h2M536.5 44.2h2M522.4 29.2v2M538 29.2v2M522.4 42.6v2M538 42.6v2" stroke="#000" stroke-width="1.2"/>
<rect x="525" y="36.5" width="9" height="6" fill="url(#gBlueSq)" stroke="#555" stroke-width="0.9"/>
<circle cx="532.5" cy="35" r="4" fill="url(#gLens)" stroke="#555" stroke-width="0.9"/>
<path d="M548 29.6h2M562.5 29.6h2M548 44.2h2M562.5 44.2h2M548.4 29.2v2M564 29.2v2M548.4 42.6v2M564 42.6v2" stroke="#000" stroke-width="1.2"/>
<path d="M550 30h12.5M550 44h12.5M548.5 31.5v11M564 31.5v11" stroke="#000" stroke-width="0.8" stroke-dasharray="1 1.2"/>
<rect x="551" y="36.5" width="9" height="6" fill="#f5c828" stroke="#555" stroke-width="0.9"/>
<circle cx="558.5" cy="35" r="4" fill="url(#gLens)" stroke="#555" stroke-width="0.9"/>
<rect x="586" y="30" width="14.5" height="14.5" fill="#fbfbfb" stroke="#000" stroke-width="1"/><path d="M586 30H600.5L586 44.5Z" fill="#000"/>
<path d="M589 44L596.5 36.5L599 38.5L592 44.5Z" fill="#222"/><path d="M596.5 36.5L601 30.5L602.3 31.8L599 38.5Z" fill="#f0a020" stroke="#a06000" stroke-width="0.5"/>
<text x="611.3" y="44.6" font-family="'Liberation Serif', serif" font-weight="bold" font-size="21.5" fill="#000" textLength="17.5" lengthAdjust="spacingAndGlyphs">T</text>
<path d="M638.5 41.2L644.5 38.0L654 39.6L648.5 43.400000000000006Z" fill="#f2f2f2" stroke="#000" stroke-width="1" stroke-linejoin="round"/>
<path d="M638.5 38L644.5 34.8L654 36.4L648.5 40.2Z" fill="#f2f2f2" stroke="#000" stroke-width="1" stroke-linejoin="round"/>
<path d="M638.5 34.8L644.5 31.599999999999998L654 33.199999999999996L648.5 37.0Z" fill="#f2f2f2" stroke="#000" stroke-width="1" stroke-linejoin="round"/>
<rect x="664" y="30" width="15.6" height="14.6" fill="#fdfdfd" stroke="#000" stroke-width="1.1"/><path d="M664 33.2H679.6" stroke="#000" stroke-width="1.2"/>
<path d="M670 36.2L667.3 38.9L670 41.6M673.6 36.2L676.3 38.9L673.6 41.6" fill="none" stroke="#000" stroke-width="1.1"/>
<path d="M690.7 29.5V45" stroke="#e11" stroke-width="1.3"/>
<rect x="692.7" y="30.2" width="6" height="3.6" fill="#a9c4e6" stroke="#555" stroke-width="0.8"/><rect x="692.7" y="35.6" width="12.6" height="3.6" fill="#a9c4e6" stroke="#555" stroke-width="0.8"/><rect x="692.7" y="41" width="8.6" height="3.6" fill="#a9c4e6" stroke="#555" stroke-width="0.8"/>
<path d="M732.2 33L741.2 42" stroke="#7d7d7d" stroke-width="3.6" stroke-linecap="butt"/><path d="M732.2 33L741.2 42" stroke="#cfcfcf" stroke-width="2"/>
<circle cx="731.4" cy="32.2" r="2.7" fill="#cfcfcf" stroke="#7d7d7d" stroke-width="0.9"/><path d="M731.2 32L728.6 29.2L730.8 28.6Z" fill="#d6dbf0" stroke="#d6dbf0" stroke-width="1.2"/>
<circle cx="742" cy="42.8" r="2.7" fill="#cfcfcf" stroke="#7d7d7d" stroke-width="0.9"/><path d="M742.2 43L744.8 45.8L742.6 46.4Z" fill="#d6dbf0" stroke="#d6dbf0" stroke-width="1.2"/>
<path d="M742.6 30.6L737 37" stroke="#8e8e8e" stroke-width="2" stroke-linecap="round"/>
<path d="M736.6 37.4L730.6 43.4" stroke="#1f5aa6" stroke-width="4.2" stroke-linecap="round"/><path d="M736.4 37.6L730.8 43.2" stroke="#4a90e0" stroke-width="2.4" stroke-linecap="round"/>
<path d="M755.5 30.5H764.5L768.5 34.5V44.5H755.5Z" fill="url(#gPage)" stroke="#a3a395" stroke-width="1"/><path d="M764.5 30.5V34.5H768.5" fill="none" stroke="#a3a395" stroke-width="1"/>
<path d="M757.8 32.4h2.4v2.6l1.8 1.4l1.8 -1.4v-2.6h2.4v3.6l-2.6 2.6v3.6h-3.2v-3.6l-2.6 -2.6z" fill="#b9b9b9" stroke="#777" stroke-width="0.8"/><path d="M762 41.6v3" stroke="#2a6ad0" stroke-width="3"/>
<path d="M61 61V83" stroke="#a7a9b6" stroke-width="1"/><path d="M62 61V83" stroke="#f6f7fc" stroke-width="1"/>
<path d="M151 61V83" stroke="#a7a9b6" stroke-width="1"/><path d="M152 61V83" stroke="#f6f7fc" stroke-width="1"/>
<path d="M266.5 61V83" stroke="#a7a9b6" stroke-width="1"/><path d="M267.5 61V83" stroke="#f6f7fc" stroke-width="1"/>
<path d="M20.8 76.4L22.3 78.3" stroke="#000" stroke-width="2.6" stroke-linecap="round"/><circle cx="15.6" cy="71.2" r="7.3" fill="url(#gLens)" stroke="#111" stroke-width="1.25"/><path d="M11.6 71.2h8M15.6 67.2v8" stroke="#000" stroke-width="2"/>
<path d="M46.8 76.4L48.3 78.3" stroke="#000" stroke-width="2.6" stroke-linecap="round"/><circle cx="41.6" cy="71.2" r="7.3" fill="url(#gLens)" stroke="#111" stroke-width="1.25"/><path d="M37.6 71.2h8" stroke="#000" stroke-width="2"/>
<path d="M84.7 76.4L86.2 78.3" stroke="#000" stroke-width="2.6" stroke-linecap="round"/><circle cx="79.5" cy="71.2" r="7.3" fill="url(#gLens)" stroke="#111" stroke-width="1.25"/><text x="79.5" y="75.10000000000001" text-anchor="middle" font-family="'Liberation Sans', sans-serif" font-weight="bold" font-size="11" fill="#000" textLength="11.6" lengthAdjust="spacingAndGlyphs">1:1</text>
<path d="M110.7 76.4L112.2 78.3" stroke="#000" stroke-width="2.6" stroke-linecap="round"/><circle cx="105.5" cy="71.2" r="7.3" fill="url(#gLens)" stroke="#111" stroke-width="1.25"/><text x="105.5" y="75.10000000000001" text-anchor="middle" font-family="'Liberation Sans', sans-serif" font-weight="bold" font-size="11" fill="#000" textLength="11.6" lengthAdjust="spacingAndGlyphs">1:2</text>
<path d="M136.7 76.4L138.2 78.3" stroke="#000" stroke-width="2.6" stroke-linecap="round"/><circle cx="131.5" cy="71.2" r="7.3" fill="url(#gLens)" stroke="#111" stroke-width="1.25"/><text x="131.5" y="75.10000000000001" text-anchor="middle" font-family="'Liberation Sans', sans-serif" font-weight="bold" font-size="11" fill="#000" textLength="11.6" lengthAdjust="spacingAndGlyphs">2:1</text>
<path d="M174.4 76.4L175.9 78.3" stroke="#000" stroke-width="2.6" stroke-linecap="round"/><circle cx="169.2" cy="71.2" r="7.3" fill="url(#gLens)" stroke="#111" stroke-width="1.25"/><rect x="164.5" y="67.6" width="9.4" height="7.2" fill="#fff" stroke="#000" stroke-width="1" stroke-dasharray="1 1"/>
<path d="M200.7 76.4L202.2 78.3" stroke="#000" stroke-width="2.6" stroke-linecap="round"/><circle cx="195.5" cy="71.2" r="7.3" fill="url(#gLens)" stroke="#111" stroke-width="1.25"/><rect x="191.2" y="67" width="5" height="5" fill="#f5cf3a" stroke="#000" stroke-width="0.9"/><rect x="194.5" y="70.2" width="5" height="5" fill="#f8dc62" stroke="#000" stroke-width="0.9"/>
<path d="M226.7 76.4L228.2 78.3" stroke="#000" stroke-width="2.6" stroke-linecap="round"/><circle cx="221.5" cy="71.2" r="7.3" fill="url(#gLens)" stroke="#111" stroke-width="1.25"/><rect x="218.2" y="66.8" width="6.6" height="8.8" fill="url(#gGrayPg)" stroke="#000" stroke-width="1"/>
<path d="M252.7 76.4L254.2 78.3" stroke="#000" stroke-width="2.6" stroke-linecap="round"/><circle cx="247.5" cy="71.2" r="7.3" fill="url(#gLens)" stroke="#111" stroke-width="1.25"/><rect x="243" y="69.8" width="10.5" height="7" rx="1" fill="url(#gGrayPg)" stroke="#000" stroke-width="1"/>
<path d="M290.5 76.4L292.0 78.3" stroke="#000" stroke-width="2.6" stroke-linecap="round"/><circle cx="285.3" cy="71.2" r="7.3" fill="url(#gLens)" stroke="#111" stroke-width="1.25"/><path d="M288.8 67.2V75.2L282.6 71.2Z" fill="#f5cf3a" stroke="#000" stroke-width="0.9"/><path d="M282 66.8V75.6" stroke="#000" stroke-width="1.3"/>
<path d="M316.7 76.4L318.2 78.3" stroke="#000" stroke-width="2.6" stroke-linecap="round"/><circle cx="311.5" cy="71.2" r="7.3" fill="url(#gLens)" stroke="#111" stroke-width="1.25"/><path d="M308 67.2V75.2L314.2 71.2Z" fill="#f5cf3a" stroke="#000" stroke-width="0.9"/><path d="M315 66.8V75.6" stroke="#000" stroke-width="1.3"/>
<path d="M12 100.2V115.6L15.6 112.3L18.3 118.4L21.2 117.1L18.5 111.2L23 110.6Z" fill="#000"/>
<path d="M8.6 146C9 138 12 131 26 129.4" fill="none" stroke="#666" stroke-width="1.1"/>
<rect x="9.6" y="130.6" width="5.8" height="5.8" fill="#7a7af2" stroke="#1818e8" stroke-width="1.3"/>
<rect x="25.6" y="127.6" width="3.8" height="3.8" fill="#c8c8ff" stroke="#3a3af0" stroke-width="0.9"/>
<rect x="6.5" y="146.6" width="3.8" height="3.8" fill="#c8c8ff" stroke="#3a3af0" stroke-width="0.9"/>
<path d="M14.2 135L27.2 143.6L21.8 148.8Z" fill="#000"/>
<path d="M7.5 171.5C13 171 14.5 166 16 162.5C17.6 158.8 21.5 157.4 24.8 159.4C27.6 161.2 27 165 24.5 165.4C22.8 165.6 22 164.2 22.8 163.2C20.6 163.4 20 166 21.2 167.8C22.8 170.2 26 171 29 171.2V178.8H7.5Z" fill="url(#gWave)"/>
<path d="M7.5 171.5C13 171 14.5 166 16 162.5C17.6 158.8 21.5 157.4 24.8 159.4C27.6 161.2 27 165 24.5 165.4C22.8 165.6 22 164.2 22.8 163.2C20.6 163.4 20 166 21.2 167.8C22.8 170.2 26 171 29 171.2" fill="none" stroke="#fff" stroke-width="2.6"/>
<path d="M7.5 171.5C13 171 14.5 166 16 162.5C17.6 158.8 21.5 157.4 24.8 159.4C27.6 161.2 27 165 24.5 165.4C22.8 165.6 22 164.2 22.8 163.2C20.6 163.4 20 166 21.2 167.8C22.8 170.2 26 171 29 171.2" fill="none" stroke="#111" stroke-width="1.5"/>
<rect x="3.5" y="185.5" width="29" height="27" rx="3" fill="#c9cfe2" stroke="#6e7180" stroke-width="1"/>
<path d="M22 202L28.6 208.6" stroke="#8a5a00" stroke-width="6" stroke-linecap="round"/><path d="M22.2 202.2L28.4 208.4" stroke="#f5a81c" stroke-width="4.2" stroke-linecap="round"/><path d="M23.6 201.8L29.4 207.6" stroke="#ffd98a" stroke-width="1.2" stroke-linecap="round"/>
<path d="M19.5 199.5L22 202" stroke="#777" stroke-width="3"/>
<circle cx="14.9" cy="194.9" r="7.6" fill="url(#gLens)" stroke="#111" stroke-width="1.5"/>
<rect x="8.5" y="219.7" width="19" height="18.6" fill="url(#gBlueSq)" stroke="#000" stroke-width="1.3"/>
<path d="M18.6 247.3L28.6 252.6V264L18.2 269.8L8.6 264.4V252.4Z" fill="#e9e9f7" stroke="#222" stroke-width="1.1" stroke-linejoin="round"/>
<path d="M8.6 252.4L18.8 257.6V247.3Z" fill="#c8c8e6"/><path d="M8.6 252.4L18.6 247.3L18.8 258L9 264Z" fill="url(#gBox1)"/>
<path d="M9 264.2L18.8 258L28.4 263.8L18.2 269.6Z" fill="#34348c"/>
<path d="M18.8 247.6V258L28.4 263.8V252.6Z" fill="#efeffa"/>
<path d="M18.6 247.3L28.6 252.6V264L18.2 269.8L8.6 264.4V252.4Z" fill="none" stroke="#222" stroke-width="1.1" stroke-linejoin="round"/>
<circle cx="18" cy="288.4" r="9.3" fill="url(#gPink)" stroke="#000" stroke-width="1.3"/>
<path d="M13.6 308.8L21 312.4L19.6 321L10.6 323.6L7 315Z" fill="#f6ea8c" stroke="#000" stroke-width="1.2" stroke-linejoin="round"/>
<path d="M22.6 313.2L24.3 318.6L29.8 319.9L25.1 323.1L25.7 328.8L21.1 325.4L15.9 327.7L17.8 322.3L14.0 318.0L19.7 318.1Z" fill="#fbf08e" stroke="#000" stroke-width="1.2" stroke-linejoin="round"/>
<path d="M16.7 349.6L16.9 349.2L17.1 348.9L17.5 348.7L18.0 348.6L18.6 348.6L19.1 348.8L19.6 349.1L20.1 349.6L20.3 350.3L20.4 351.1L20.3 351.8L20.0 352.6L19.4 353.3L18.7 353.8L17.7 354.2L16.7 354.2L15.7 354.0L14.7 353.5L13.8 352.8L13.2 351.8L12.8 350.6L12.8 349.3L13.1 348.0L13.7 346.8L14.7 345.7L15.9 345.0L17.4 344.6L18.9 344.5L20.5 344.9L21.9 345.8L23.1 346.9L24.0 348.4L24.5 350.2L24.5 352.0L24.0 353.8L23.0 355.4L21.6 356.8L19.9 357.8L17.9 358.3L15.8 358.3L13.7 357.7L11.9 356.6L10.3 355.0L9.2 353.0L8.7 350.7L8.7 348.4L9.4 346.1L10.7 344.0L12.5 342.3L14.7 341.0L17.2 340.5L19.9 340.5L22.4 341.3L24.7 342.7L26.6 344.8L27.9 347.2L28.6 350.0L28.5 352.9L27.6 355.7L26.0 358.2" fill="none" stroke="#111" stroke-width="1.3"/>
<path d="M7.5 369C11 367 13 368.5 10.5 372.5C8 376.5 9 378.5 13 378C15 385 12.5 389.5 17 389.8C21 390 25 388 27 384.5" fill="none" stroke="#111" stroke-width="1.2"/>
<path d="M17.4 385.2L17.6 377.6L23 366.8L29.6 370.4L24.2 381.6Z" fill="url(#gOrange)" stroke="#5a3c00" stroke-width="0.8"/>
<path d="M17.4 385.2L17.6 377.8Q21.4 376.6 24.2 381.6Z" fill="#fffaf0" stroke="#5a3c00" stroke-width="0.6"/><path d="M17.4 385.2L17.6 382.6L19.6 383.6Z" fill="#222"/>
<path d="M23.2 368.6L25.4 369.8L20.6 378.6" fill="none" stroke="#fff3a8" stroke-width="1.8"/>
<path d="M8.6 398.4H19.2C13 404 16.5 413 8.8 418.5" fill="none" stroke="#111" stroke-width="1.1"/>
<path d="M10 418.6H17.6" stroke="#111" stroke-width="1"/>
<rect x="6.6" y="416.4" width="3.6" height="3.8" fill="#fff" stroke="#000" stroke-width="1"/><circle cx="17.8" cy="418.6" r="1.5" fill="#fff" stroke="#000" stroke-width="0.9"/>
<path d="M18.6 416.6L21.4 409.4L23.6 410.6L19.6 417.2Z" fill="#c9c9c9" stroke="#444" stroke-width="0.7"/>
<path d="M20.6 409L22 405.6L26.6 408.2L24.6 411.4Z" fill="#f2b53a" stroke="#7a5200" stroke-width="0.7"/>
<path d="M21.6 405.4L24.2 397.4L30 400.6L26.8 408.4Z" fill="#6f9fca" stroke="#27507c" stroke-width="0.8"/><path d="M24.6 398.6L22.8 404.8" stroke="#cfe3f4" stroke-width="1.3"/>
<path d="M6.4 427C13 427.6 16 431.5 13.8 437.5C11.6 443.5 12.4 447.6 17 448.6C21 449.4 26 447 29.6 444.8C25.4 448.8 21 451.4 15.4 450.6C8 449.6 6.8 443 8.8 437C10.4 432 9.8 429.4 6.4 427Z" fill="#111" stroke="#111" stroke-width="0.8"/>
<path d="M17.4 446L17.8 438.6L21.8 432.2L27.2 435.2L23.4 442Z" fill="#f5d23a" stroke="#222" stroke-width="0.9" stroke-linejoin="round"/>
<path d="M17.4 446L20.6 440" stroke="#222" stroke-width="0.9"/><circle cx="20.8" cy="439.6" r="1" fill="#222"/>
<path d="M22 432L24.6 427.2L29.8 430L27.2 435Z" fill="#5f8fc0" stroke="#27507c" stroke-width="0.8"/><path d="M21.8 432.2L27.2 435.2L27.8 434L22.4 431Z" fill="#d11a1a"/>
<text x="6.6" y="477.8" font-family="'Liberation Sans', sans-serif" font-weight="bold" font-size="26" fill="#111" textLength="19.4" lengthAdjust="spacingAndGlyphs">A</text>
<path d="M24.6 457.8H28.8M24.6 480H28.8M26.7 457.8V480" fill="none" stroke="#111" stroke-width="1"/>
<path d="M17.6 498.6L20.6 495.4L26.4 496.8L29.8 508.6L19.4 509.4Z" fill="url(#gCan)" stroke="#1f5a14" stroke-width="0.8" stroke-linejoin="round"/>
<path d="M18.2 497.8L20.6 495.4L26.4 496.8L27 498.8Z" fill="#d8c050"/>
<rect x="19.6" y="491.8" width="4.4" height="3.4" rx="0.6" fill="#f4f4f4" stroke="#555" stroke-width="0.8"/>
<circle cx="8.6" cy="489.6" r="0.9" fill="#111"/>
<circle cx="12.2" cy="490.6" r="0.8" fill="#111"/>
<circle cx="9.4" cy="493.6" r="1.1" fill="#111"/>
<circle cx="13.2" cy="494.2" r="0.8" fill="#111"/>
<circle cx="10.8" cy="498.8" r="1.2" fill="#111"/>
<circle cx="15" cy="492.2" r="0.7" fill="#111"/>
<circle cx="14.6" cy="496.6" r="0.7" fill="#111"/>
<circle cx="7.8" cy="496.8" r="0.7" fill="#111"/>
<path d="M18.4 517.6L27 523.8L17.7 539.4L8.6 533Z" fill="url(#gEraser)" stroke="#111" stroke-width="1.2" stroke-linejoin="round"/>
<path d="M9.4 553.6C10.4 558 12.4 562 13.8 566.8C10 567 6.4 568.2 6.4 569.4C6.4 570.8 12 571.2 17.6 571C23 570.8 26.6 570 26.6 568.8C26.6 567.8 22 567 17 566.8C16.6 563 15.2 558 13 553Z" fill="#7fcf8a" stroke="#1f6a2a" stroke-width="0.9" stroke-linejoin="round"/>
<path d="M10 552.6L22.6 547.4Q24.6 546.8 25.6 548.8L29 558.4Q29.4 560.4 27.6 561.2L16 565.4Z" fill="url(#gBucket)" stroke="#0f2f55" stroke-width="1" stroke-linejoin="round"/>
<path d="M12.6 554.6L14.4 547.4L16.6 556.6" fill="none" stroke="#555" stroke-width="0.9"/><circle cx="16.8" cy="557.2" r="1" fill="#c22"/>
<rect x="7.2" y="578.4" width="21.2" height="21.2" fill="url(#gGreenSq)" stroke="#dfeee0" stroke-width="0.6"/>
<path d="M11.6 583.6L24.2 594.2" stroke="#333" stroke-width="1.2"/>
<rect x="9.6" y="581.4" width="4" height="4" fill="#fff" stroke="#333" stroke-width="0.9"/><rect x="22.2" y="592.2" width="4" height="4" fill="#fff" stroke="#333" stroke-width="0.9"/>
<text x="14.8" y="628" font-family="'Liberation Sans', sans-serif" font-size="14" fill="#6464b4" textLength="8" lengthAdjust="spacingAndGlyphs">»</text>
<path d="M770.5 92V637" stroke="#9a9ca8" stroke-width="1"/><path d="M771.5 92V637" stroke="#eceef8" stroke-width="1"/>
<path d="M778.7 125.8H795" stroke="#f4f5fb" stroke-width="1.2"/>
<path d="M778.7 267.3H795" stroke="#f4f5fb" stroke-width="1.2"/>
<path d="M778.7 488H795" stroke="#f4f5fb" stroke-width="1.2"/>
<path d="M783.5 103.5L790 110" stroke="#111" stroke-width="1.3"/><path d="M791.2 111.2L786.8 110.2L790.2 106.8Z" fill="#111"/>
<path d="M781.9 99.2L784.5 101.8L781.9 104.39999999999999L779.3 101.8Z" fill="#dcdcff" stroke="#2222ee" stroke-width="1.3"/>
<path d="M792.2 109.4L794.8000000000001 112L792.2 114.6L789.6 112Z" fill="#9fd0a8" stroke="#2f8a4f" stroke-width="1.3"/>
<path d="M786 141H796.5M783.4 144V153.5" stroke="#2a2a2a" stroke-width="1" stroke-dasharray="1 1.1" fill="none"/>
<path d="M783.4 138.6L785.8 141L783.4 143.4L781.0 141Z" fill="#b8b8e8" stroke="#33338a" stroke-width="0.8"/>
<path d="M792 163V175.7H779" stroke="#2a2a2a" stroke-width="1" stroke-dasharray="1 1.1" fill="none"/>
<path d="M792.5 190V202.7H779.7" stroke="#2a2a2a" stroke-width="1" stroke-dasharray="1 1.1" fill="none"/>
<path d="M792.5 200.29999999999998L794.9 202.7L792.5 205.1L790.1 202.7Z" fill="#a8d8b0" stroke="#2f6a3f" stroke-width="0.8"/>
<path d="M793 219.8V228.3H780.5" stroke="#333" stroke-width="1" stroke-dasharray="1.4 0.8" fill="none"/>
<path d="M793 217.29999999999998L795.3 219.6L793 221.9L790.7 219.6Z" fill="#a8d8b0" stroke="#2f6a3f" stroke-width="0.8"/>
<path d="M791.5 241.7V253.8H780" stroke="#333" stroke-width="1" stroke-dasharray="1.4 0.8" fill="none"/>
<path d="M782.6 243.3L784.6 245.3L782.6 247.3L780.6 245.3Z" fill="#a8d8b0" stroke="#2f6a3f" stroke-width="0.8"/>
<path d="M780 287.5L785.5 282.5C785 289 789 293.5 795 295" fill="none" stroke="#555" stroke-width="1" stroke-dasharray="2 0.8"/>
<path d="M787.8 280.6L790.1999999999999 283L787.8 285.4L785.4 283Z" fill="#c8c8ff" stroke="#3a3ad0" stroke-width="0.8"/>
<path d="M779.8 306.6C786 307.5 790.5 311 789 318.6M786.4 316L789 319.2L793.6 315.2" fill="none" stroke="#3f7a4a" stroke-width="1.2" stroke-dasharray="2.2 0.7"/>
<path d="M780 345.8L794.2 332M781 339.4H792.6" fill="none" stroke="#333" stroke-width="1"/>
<path d="M786.8 337.09999999999997L789.0999999999999 339.4L786.8 341.7L784.5 339.4Z" fill="#a8d8b0" stroke="#2f6a3f" stroke-width="0.8"/>
<path d="M780 357.6C785.5 358.5 789.5 361.5 787.4 368.4M787.4 369.4L795 364.6" fill="none" stroke="#444" stroke-width="1" stroke-dasharray="2.2 0.7"/>
<path d="M786.8 367.0L789.1999999999999 369.4L786.8 371.79999999999995L784.4 369.4Z" fill="#a8d8b0" stroke="#2f6a3f" stroke-width="0.8"/>
<path d="M779.8 384.6C785 384.8 789.2 388 788 395.4C790 396.5 792.6 394.6 794.2 391.8" fill="none" stroke="#444" stroke-width="1" stroke-dasharray="2.2 0.7"/>
<path d="M786.4 384.09999999999997L788.6999999999999 386.4L786.4 388.7L784.1 386.4Z" fill="#a8d8b0" stroke="#2f6a3f" stroke-width="0.8"/>
<path d="M781 422L792 411" stroke="#555" stroke-width="1"/>
<path d="M782.6 417.9L784.9 420.2L782.6 422.5L780.3000000000001 420.2Z" fill="#f0b0b0" stroke="#b02a2a" stroke-width="0.8"/>
<path d="M790.4 410.09999999999997L792.6999999999999 412.4L790.4 414.7L788.1 412.4Z" fill="#f0b0b0" stroke="#b02a2a" stroke-width="0.8"/>
<path d="M786.5 414.4L788.5 416.4L786.5 418.4L784.5 416.4Z" fill="#a8d8b0" stroke="#2f6a3f" stroke-width="0.8"/>
<path d="M791.5 436V448H779.5" stroke="#2a2a2a" stroke-width="1" stroke-dasharray="1 1.1" fill="none"/>
<circle cx="784" cy="440.8" r="1.6" fill="#8aa892" stroke="#555" stroke-width="0.7"/>
<path d="M791.5 462V474H779.5" stroke="#2a2a2a" stroke-width="1" stroke-dasharray="1 1.1" fill="none"/>
<path d="M781 466.2H787.4M784.2 463V469.4" stroke="#222" stroke-width="1.1"/>
<rect x="781.5" y="499.8" width="10.5" height="14" rx="1.2" fill="url(#gGrayPg)" stroke="#222" stroke-width="1.1" stroke-dasharray="1.2 0.6"/>
<path d="M781.30 526V541.6M780.3 527.00H796.4M784.95 526V541.6M780.3 530.40H796.4M788.60 526V541.6M780.3 533.80H796.4M792.25 526V541.6M780.3 537.20H796.4M795.90 526V541.6M780.3 540.60H796.4" stroke="#22229a" stroke-width="1" fill="none" opacity="0.4"/>
<path d="M780.60 527.00h1.4M780.60 530.40h1.4M780.60 533.80h1.4M780.60 537.20h1.4M780.60 540.60h1.4M784.25 527.00h1.4M784.25 530.40h1.4M784.25 533.80h1.4M784.25 537.20h1.4M784.25 540.60h1.4M787.90 527.00h1.4M787.90 530.40h1.4M787.90 533.80h1.4M787.90 537.20h1.4M787.90 540.60h1.4M791.55 527.00h1.4M791.55 530.40h1.4M791.55 533.80h1.4M791.55 537.20h1.4M791.55 540.60h1.4M795.20 527.00h1.4M795.20 530.40h1.4M795.20 533.80h1.4M795.20 537.20h1.4M795.20 540.60h1.4" stroke="#15158a" stroke-width="1.5" fill="none"/>
<path d="M781.6 551.6V567.4M793.6 551.6V567.4M793 552L786 567" stroke="#22229a" stroke-width="1.1" stroke-dasharray="1.4 0.8" fill="none"/>
<rect x="743.5" y="93.5" width="21.5" height="19" rx="2.5" fill="#d4d4d4" stroke="#6f6f6f" stroke-width="1"/>
<path d="M759.8 108.4L761.4 110.4" stroke="#000" stroke-width="2.6" stroke-linecap="round"/><circle cx="754.4" cy="103" r="7.6" fill="url(#gLens)" stroke="#111" stroke-width="1.25"/><text x="754.4" y="107" text-anchor="middle" font-family="'Liberation Sans', sans-serif" font-weight="bold" font-size="11" fill="#000" textLength="11.6" lengthAdjust="spacingAndGlyphs">1:1</text>
<g><path d="M749.2 617.8L760.4 628.3L750.4 633.8L747 625Z" fill="#1f9a2f"/>
<path d="M749.2 617.8L760.4 628.3L750.4 633.8L747 625Z" fill="url(#gCmsR)"/>
<path d="M749.2 617.8L760.4 628.3L750.4 633.8L747 625Z" fill="url(#gCmsB)"/>
<path d="M749.2 617.8L760.4 628.3L750.4 633.8L747 625Z" fill="url(#gCmsC)"/>
<rect x="746" y="617" width="15" height="18" fill="url(#pChk)"/></g>
<path d="M187 691Q194.6 683.6 202.4 691Q194.6 698 187 691Z" fill="#fff" stroke="#000" stroke-width="1.5"/><circle cx="194.8" cy="690.8" r="3.5" fill="#000"/><circle cx="193.6" cy="689.6" r="1" fill="#fff"/>
<path d="M188.6 686.6L187.2 684M191.4 685L190.6 682.6M194.8 684.4V681.8M198.2 685L199 682.6M201 686.6L202.4 684" stroke="#000" stroke-width="1.2"/>
<path d="M214.6 689V686.4Q214.6 683.4 217.4 683.2Q220.4 683.2 221.2 686.2" fill="none" stroke="#111" stroke-width="1.6"/>
<rect x="212" y="689" width="10.4" height="8.8" rx="1" fill="#f6e89a" stroke="#111" stroke-width="1.1"/><path d="M213.4 691.8h7.6M213.4 694.4h7.6" stroke="#e6c84a" stroke-width="0.9"/><rect x="216.4" y="691.6" width="1.8" height="3.2" fill="#7a6a20"/>
<rect x="0" y="0" width="802" height="1" fill="#2d4a52"/><rect x="0" y="0" width="1.3" height="705" fill="#24474f"/><rect x="800.6" y="1" width="1.4" height="704" fill="#fbfbfd"/>
</svg>
</body></html>
